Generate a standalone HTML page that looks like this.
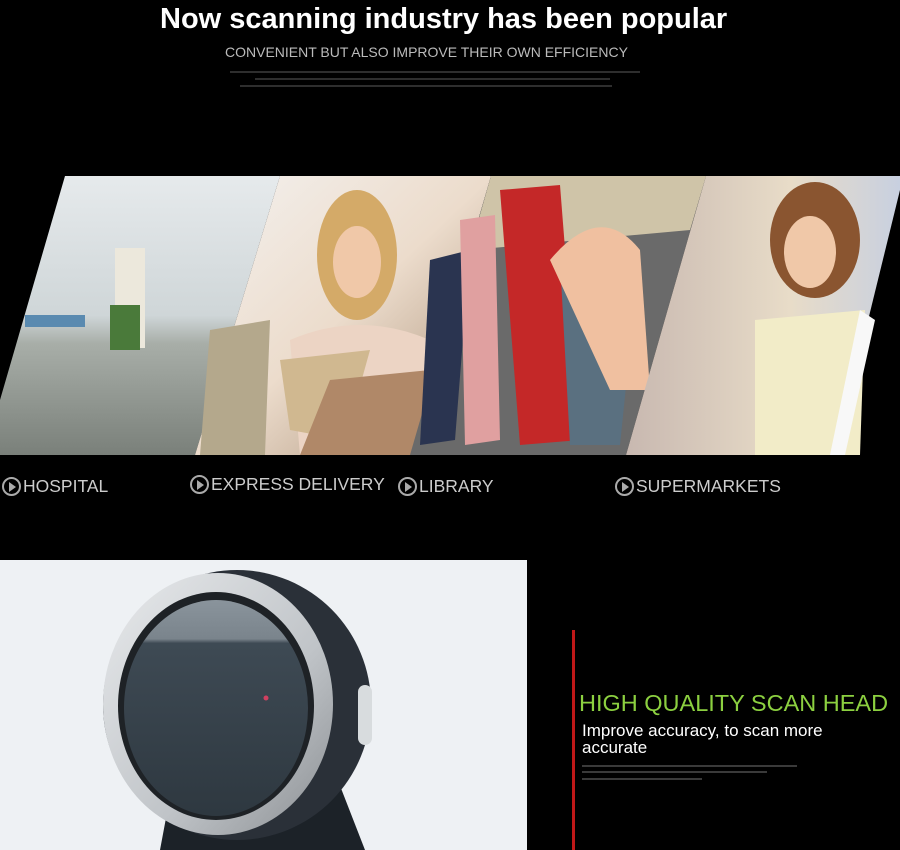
<!DOCTYPE html>
<html><head><style>
body{margin:0;width:900px;height:850px;background:#000;overflow:hidden;position:relative;font-family:"Liberation Sans",sans-serif;}
.t{position:absolute;color:#fff;white-space:nowrap}
.lab{position:absolute;top:476px;color:#ccc;font-size:17.5px;display:flex;align-items:center;gap:2px}
.ic{width:19px;height:19px;border:2px solid #aaa;border-radius:50%;box-sizing:border-box;position:relative;display:inline-block}
.ic:after{content:"";position:absolute;left:5px;top:3px;border-left:7px solid #aaa;border-top:5px solid transparent;border-bottom:5px solid transparent}
.fine{position:absolute;height:2px;background:#2e2e2e}
</style></head><body>
<div class="t" style="left:160px;top:3px;font-size:29px;font-weight:bold;">Now scanning industry has been popular</div>
<div class="t" style="left:225px;top:44px;font-size:14px;color:#bbb;">CONVENIENT BUT ALSO IMPROVE THEIR OWN EFFICIENCY</div>
<div class="fine" style="left:230px;top:71px;width:410px"></div>
<div class="fine" style="left:255px;top:78px;width:355px"></div>
<div class="fine" style="left:240px;top:85px;width:372px"></div>

<svg style="position:absolute;left:0;top:0" width="900" height="850">
<defs>
<linearGradient id="h" x1="0" y1="0" x2="0" y2="1"><stop offset="0" stop-color="#e6eaec"/><stop offset=".5" stop-color="#cfd6d8"/><stop offset=".6" stop-color="#a8aea8"/><stop offset="1" stop-color="#7a807a"/></linearGradient>
<linearGradient id="e" x1="0" y1="0" x2="1" y2="1"><stop offset="0" stop-color="#f4f2f0"/><stop offset=".5" stop-color="#ecdccc"/><stop offset="1" stop-color="#a58a70"/></linearGradient>
<linearGradient id="s" x1="0" y1="0" x2="1" y2="0"><stop offset="0" stop-color="#c8b8b0"/><stop offset=".6" stop-color="#e8dcc8"/><stop offset="1" stop-color="#c8d0e0"/></linearGradient>
<linearGradient id="ring" x1="0" y1="0" x2="1" y2="1"><stop offset="0" stop-color="#e8eaec"/><stop offset=".6" stop-color="#c0c4c8"/><stop offset="1" stop-color="#8a8e92"/></linearGradient>
<linearGradient id="lens" x1="0" y1="0" x2="0" y2="1"><stop offset="0" stop-color="#8a949c"/><stop offset=".18" stop-color="#7a848c"/><stop offset=".2" stop-color="#3e4a54"/><stop offset="1" stop-color="#2e3840"/></linearGradient>
</defs>
<polygon points="65,176 280,176 195,455 0,455 0,400" fill="url(#h)"/>
<rect x="115" y="248" width="30" height="100" fill="#ece8dc"/>
<rect x="25" y="315" width="60" height="12" fill="#5a8ab0"/>
<rect x="110" y="305" width="30" height="45" fill="#4a7a3a"/>
<polygon points="280,176 491,176 410,455 195,455" fill="url(#e)"/>
<ellipse cx="357" cy="255" rx="40" ry="65" fill="#d4aa68"/>
<ellipse cx="357" cy="262" rx="24" ry="36" fill="#f0c8a8"/>
<path d="M290 340 Q360 310 430 340 L420 455 L300 455Z" fill="#ecd4c4"/>
<polygon points="210,330 270,320 265,455 200,455" fill="#b4a88c"/>
<polygon points="280,360 370,350 345,440 290,430" fill="#d0b890"/>
<polygon points="330,380 430,370 420,455 300,455" fill="#b08868"/>
<polygon points="491,176 706,176 626,455 410,455" fill="#6a6a6a"/>
<polygon points="491,176 706,176 690,230 470,250" fill="#cfc4a8"/>
<polygon points="430,260 470,250 455,440 420,445" fill="#2a3450"/>
<polygon points="460,220 495,215 500,440 465,445" fill="#e0a0a0"/>
<polygon points="500,190 560,185 580,440 520,445" fill="#c42828"/>
<polygon points="560,260 640,250 620,445 570,445" fill="#5a7080"/>
<path d="M550 260 Q600 200 640 250 L650 390 L610 390Z" fill="#f0c0a0"/>
<polygon points="706,176 900,176 900,190 835,455 626,455" fill="url(#s)"/>
<ellipse cx="815" cy="240" rx="45" ry="58" fill="#8a5530"/>
<ellipse cx="810" cy="252" rx="26" ry="36" fill="#f0c8a8"/>
<polygon points="755,320 865,310 860,455 755,455" fill="#f2ecc8"/>
<polygon points="860,310 875,320 845,455 830,455" fill="#f8f8f8"/>
<rect x="0" y="560" width="527" height="290" fill="#eef1f4"/>
<path d="M160 850 L175 770 L330 760 L365 850Z" fill="#1c2228"/>
<ellipse cx="237" cy="705" rx="134" ry="135" fill="#2a3038"/>
<rect x="358" y="685" width="14" height="60" rx="7" fill="#d8dcde"/>
<ellipse cx="218" cy="704" rx="115" ry="131" fill="url(#ring)"/>
<ellipse cx="216" cy="706" rx="98" ry="114" fill="#1e2226"/>
<ellipse cx="216" cy="708" rx="92" ry="108" fill="url(#lens)"/>
<circle cx="266" cy="698" r="2.5" fill="#d04060"/>
<rect x="572" y="630" width="3" height="220" fill="#c01818"/>
</svg>

<div class="lab" style="left:2px"><span class="ic"></span>HOSPITAL</div>
<div class="lab" style="left:190px;top:474px"><span class="ic"></span>EXPRESS DELIVERY</div>
<div class="lab" style="left:398px"><span class="ic"></span>LIBRARY</div>
<div class="lab" style="left:615px"><span class="ic"></span>SUPERMARKETS</div>

<div class="t" style="left:579px;top:690px;font-size:23.5px;color:#8cd040;">HIGH QUALITY SCAN HEAD</div>
<div class="t" style="left:582px;top:722px;font-size:17px;line-height:17px;">Improve accuracy, to scan more<br>accurate</div>
<div class="fine" style="left:582px;top:765px;width:215px;background:#3a3a3a"></div>
<div class="fine" style="left:582px;top:771px;width:185px;background:#3a3a3a"></div>
<div class="fine" style="left:582px;top:778px;width:120px;background:#3a3a3a"></div>
</body></html>
